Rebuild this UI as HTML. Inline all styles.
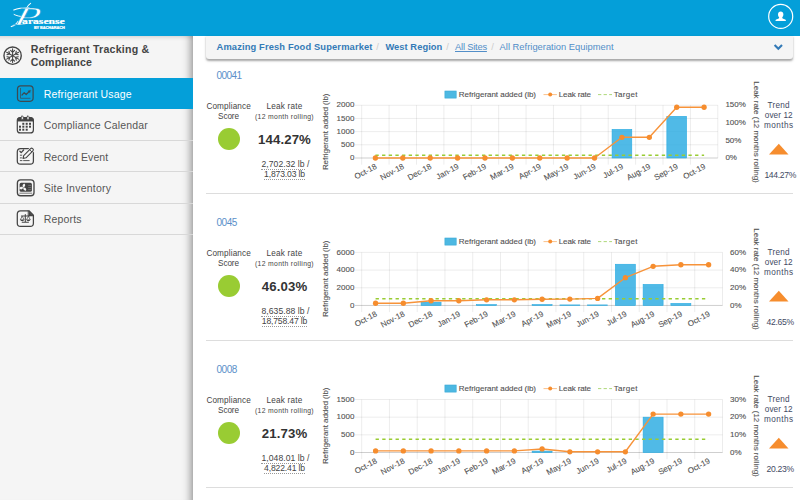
<!DOCTYPE html>
<html lang="en">
<head>
<meta charset="utf-8">
<title>Refrigerant Usage - Parasense</title>
<style>
html,body{margin:0;padding:0;}
body{width:800px;height:500px;overflow:hidden;position:relative;background:#fff;font-family:"Liberation Sans",Arial,sans-serif;color:#444;}
.t{position:absolute;white-space:nowrap;}
a{text-decoration:none;color:inherit;}
#hdr{position:absolute;left:0;top:0;width:800px;height:36.2px;background:#049fd9;}
#side{position:absolute;left:0;top:36px;width:193px;height:464px;background:#f5f5f5;box-shadow:inset -11px 0 9px -9px rgba(0,0,0,.42),inset 0 5px 4px -4px rgba(0,0,0,.16);}
#side .item{position:absolute;left:0;width:193px;height:30.25px;border-bottom:1px solid #dcdcdc;}
#side .item.sel{background:#049fd9;border-bottom:0;height:31.25px;}
#crumb{position:absolute;left:206px;top:36px;width:587.3px;height:22.5px;background:#f5f5f5;border-radius:0 0 3px 3px;box-shadow:0 1.3px 2.2px rgba(0,0,0,.35);}
.sep{position:absolute;left:206px;width:587px;height:1px;background:#ddd;}
.dot{position:absolute;width:22px;height:22px;border-radius:50%;background:#99cc33;}
svg{position:absolute;overflow:visible;}
svg text{font-family:"Liberation Sans",Arial,sans-serif;}
.ch text{fill:#505050;stroke:#505050;stroke-width:0.1px;}
.dl{position:absolute;height:0;border-top:1px dotted #999;}
</style>
</head>
<body>

<div id="hdr">
<svg id="logo" style="left:0;top:0" width="80" height="36" viewBox="0 0 80 36">
<g fill="none" stroke="#fff" stroke-linecap="round">
<path d="M13.8 10C17.5 8.4 22 7.7 29 7.7" stroke-width="1.15"/>
<path d="M14.1 14.5C16.5 15.7 19.5 16.5 24 16.8" stroke-width="0.95"/>
<path d="M18 21.5C16.4 24.3 14.3 25.9 11.3 26.5" stroke-width="1.25"/>
<path d="M26.4 8.4C27.4 6.2 28.8 4.6 30.6 3.4" stroke-width="1.05"/>
</g>
<text transform="translate(13.4 24.6) skewX(-14) scale(1.56 1)" font-style="italic" font-size="26" fill="#fff" stroke="#049fd9" stroke-width="0.45" style="font-family:'Liberation Serif',serif">P</text>
<text x="22.1" y="23.5" font-weight="bold" font-size="8.1" fill="#fff" stroke="#fff" stroke-width="0.2" textLength="42.6" lengthAdjust="spacingAndGlyphs" style="font-family:'Liberation Serif',serif">arasense</text>
<text x="33.9" y="28.9" font-weight="bold" font-size="3.2" fill="#fff" stroke="#fff" stroke-width="0.22" textLength="30.8" lengthAdjust="spacingAndGlyphs">BY BACHARACH</text>
</svg>
<svg id="user" style="left:766px;top:2px" width="30" height="30" viewBox="766 2 30 30">
<circle cx="780.7" cy="16.4" r="12" fill="none" stroke="#fff" stroke-width="1.2"/>
<path d="M780.7 11.6c1.6 0 2.7 1.2 2.7 2.9 0 1.2-.5 2.2-1.1 2.8-.2.7.1 1.1.9 1.4l2 .8c.6.3.7.8.7 1.5h-10.4c0-.7.1-1.2.7-1.5l2-.8c.8-.3 1.1-.7.9-1.4-.6-.6-1.1-1.6-1.1-2.8 0-1.7 1.1-2.9 2.7-2.9z" fill="#fff"/>
</svg>
</div>
<div id="side">
</div>
<div class="item sel" style="position:absolute;left:0;top:78px;width:193px;height:31.33px;background:#049fd9;"></div>
<a class="t" style="left:43.70px;top:88px;font-size:10.5px;line-height:13.12px;color:#fff;letter-spacing:0.170px;">Refrigerant Usage</a>
<div class="item" style="position:absolute;left:0;top:109.33px;width:193px;height:30.58px;border-bottom:0.75px solid #d8d8d8;"></div>
<a class="t" style="left:43.70px;top:119px;font-size:10.5px;line-height:13.12px;color:#555;letter-spacing:0.175px;">Compliance Calendar</a>
<div class="item" style="position:absolute;left:0;top:140.67px;width:193px;height:30.58px;border-bottom:0.75px solid #d8d8d8;"></div>
<a class="t" style="left:43.70px;top:151px;font-size:10.5px;line-height:13.12px;color:#555;letter-spacing:0.082px;">Record Event</a>
<div class="item" style="position:absolute;left:0;top:172px;width:193px;height:30.58px;border-bottom:0.75px solid #d8d8d8;"></div>
<a class="t" style="left:43.70px;top:182px;font-size:10.5px;line-height:13.12px;color:#555;letter-spacing:0.243px;">Site Inventory</a>
<div class="item" style="position:absolute;left:0;top:203.33px;width:193px;height:30.58px;border-bottom:0.75px solid #d8d8d8;"></div>
<a class="t" style="left:43.70px;top:213px;font-size:10.5px;line-height:13.12px;color:#555;letter-spacing:0.176px;">Reports</a>
<span class="t" style="left:30.75px;top:43px;font-size:10.6px;line-height:13.25px;color:#444;font-weight:bold;letter-spacing:0.230px;">Refrigerant Tracking &amp;</span>
<span class="t" style="left:30.75px;top:56px;font-size:10.6px;line-height:13.25px;color:#444;font-weight:bold;letter-spacing:0.117px;">Compliance</span>
<svg style="left:0;top:36px" width="193" height="200" viewBox="0 36 193 200" fill="none" stroke="#444" stroke-linecap="round" stroke-linejoin="round">
<!-- snowflake -->
<circle cx="12.6" cy="55.7" r="8.65" stroke-width="1.4"/>
<g stroke-width="1.05" transform="translate(12.6 55.7)">
<path d="M0 -6.9V6.9M-2 -5.4L0 -3.3L2 -5.4M-2 5.4L0 3.3L2 5.4"/>
<g transform="rotate(60)"><path d="M0 -6.9V6.9M-2 -5.4L0 -3.3L2 -5.4M-2 5.4L0 3.3L2 5.4"/></g>
<g transform="rotate(120)"><path d="M0 -6.9V6.9M-2 -5.4L0 -3.3L2 -5.4M-2 5.4L0 3.3L2 5.4"/></g>
</g>
<!-- usage -->
<rect x="17.5" y="85.9" width="15.6" height="15.4" rx="3.2" stroke="#3d4a52" stroke-width="1.25"/>
<path d="M20.5 88.4V98.3H30.1" stroke="#3d4a52" stroke-width="0.7"/>
<path d="M22 95L24.2 92.7L26.2 94.5L29.3 91.4" stroke="#3d4a52" stroke-width="1.2"/>
<path d="M30.5 90.2L27.9 90.9L29.8 92.8Z" fill="#3d4a52" stroke="#3d4a52" stroke-width="0.3"/>
<!-- calendar -->
<rect x="17.3" y="117.6" width="16.1" height="15.3" rx="3" stroke-width="1.2"/>
<path d="M17.6 120.9V119.6C17.6 118.3 18.6 117.5 19.8 117.5H30.9C32.1 117.5 33.1 118.3 33.1 119.6V120.9Z" fill="#444" stroke-width="0.6"/>
<rect x="21.3" y="116.2" width="2" height="3.3" rx=".6" fill="#f5f5f5" stroke-width="0.7"/>
<rect x="27" y="116.2" width="2" height="3.3" rx=".6" fill="#f5f5f5" stroke-width="0.7"/>
<g fill="#444" stroke="none">
<rect x="22.3" y="122.8" width="2" height="2"/><rect x="25.7" y="122.8" width="2" height="2"/><rect x="29" y="122.8" width="2" height="2"/>
<rect x="19" y="125.7" width="2" height="2"/><rect x="22.3" y="125.7" width="2" height="2"/><rect x="25.7" y="125.7" width="2" height="2"/><rect x="29" y="125.7" width="2" height="2"/>
<rect x="19" y="128.7" width="2" height="2"/><rect x="22.3" y="128.7" width="2" height="2"/><rect x="25.7" y="128.7" width="2" height="2"/>
</g>
<!-- record event -->
<rect x="17.3" y="148.5" width="16.1" height="15.6" rx="3.2" stroke-width="1.25"/>
<path d="M19.9 151.3L21.2 152.6L23.6 150" stroke-width="1.3"/>
<path d="M20.3 155.2H22M20.3 157.9H22M20.3 160.6H22M23.6 160.6H29.2" stroke-width="0.9"/>
<g transform="translate(23 158.5) rotate(-45)">
<path d="M0 0L2.6 1.6H12.4Q13.8 1.6 13.8 0.3V-0.3Q13.8 -1.6 12.4 -1.6H2.6Z" fill="#f5f5f5" stroke="#f5f5f5" stroke-width="2.6"/>
<path d="M0 0L2.6 1.6H12.4Q13.8 1.6 13.8 0.3V-0.3Q13.8 -1.6 12.4 -1.6H2.6Z" fill="#f5f5f5" stroke-width="1.1"/>
<path d="M10.9 -1.6V1.6" stroke-width="0.9"/>
</g>
<!-- site inventory -->
<rect x="17.4" y="179.8" width="16.6" height="15.9" rx="3.2" stroke-width="1.35"/>
<rect x="19.6" y="182.8" width="12.3" height="9" rx="1.6" fill="#444" stroke="none"/>
<g fill="#f5f5f5" stroke="none" transform="translate(23.3 187.6)">
<path d="M0 0C-1.6 -1 -1.5 -3.6 0.5 -4C1.9 -3 1.6 -1 0 0Z" transform="rotate(12)"/>
<path d="M0 0C-1.6 -1 -1.5 -3.6 0.5 -4C1.9 -3 1.6 -1 0 0Z" transform="rotate(132)"/>
<path d="M0 0C-1.6 -1 -1.5 -3.6 0.5 -4C1.9 -3 1.6 -1 0 0Z" transform="rotate(252)"/>
</g>
<path d="M28.6 185.4H30.8M28.6 187.5H30.8M28.6 189.6H30.8" stroke="#999" stroke-width="0.55"/>
<path d="M19.8 193.2H31.8" stroke-width="0.7"/>
<!-- reports -->
<path d="M20.5 210.8H29L33.4 215.2V223.2C33.4 225 32 226.4 30.2 226.4H20.5C18.7 226.4 17.3 225 17.3 223.2V214C17.3 212.2 18.7 210.8 20.5 210.8Z" stroke-width="1.25"/>
<path d="M28.3 210.8L33.5 216H28.3Z" fill="#444" stroke-width="0.5"/>
<path d="M25.3 214.6V222M22.2 222.3H28.4M21.4 215.9H29.2" stroke-width="1.05"/>
<path d="M20.4 219.6L22.2 216.2L24 219.6M26.6 219.6L28.4 216.2L30.2 219.6" stroke-width="0.7"/>
<path d="M20.3 219.6H24.1C24.1 220.6 23.2 221.2 22.2 221.2C21.2 221.2 20.3 220.6 20.3 219.6ZM26.5 219.6H30.3C30.3 220.6 29.4 221.2 28.4 221.2C27.4 221.2 26.5 220.6 26.5 219.6Z" fill="#444" stroke="none"/>
</svg>
<div id="crumb"></div>
<a class="t" style="left:216.50px;top:42px;font-size:9.33px;line-height:11.66px;color:#337ab7;font-weight:bold;letter-spacing:0.140px;">Amazing Fresh Food Supermarket</a>
<span class="t" style="left:376.30px;top:42px;font-size:9.33px;line-height:11.66px;color:#ccc;">/</span>
<a class="t" style="left:385.40px;top:42px;font-size:9.33px;line-height:11.66px;color:#337ab7;font-weight:bold;letter-spacing:0.052px;">West Region</a>
<span class="t" style="left:446.20px;top:42px;font-size:9.33px;line-height:11.66px;color:#ccc;">/</span>
<a class="t" style="left:455.00px;top:42px;font-size:9.33px;line-height:11.66px;color:#528ec8;letter-spacing:-0.200px;text-decoration:underline;">All Sites</a>
<span class="t" style="left:491.20px;top:42px;font-size:9.33px;line-height:11.66px;color:#ccc;">/</span>
<a class="t" style="left:499.60px;top:42px;font-size:9.33px;line-height:11.66px;color:#528ec8;letter-spacing:0.016px;">All Refrigeration Equipment</a>
<svg style="left:770px;top:40px" width="16" height="14" viewBox="770 40 16 14"><path d="M774.6 44.9L778.3 48.7L782 44.9" fill="none" stroke="#337ab7" stroke-width="2.1" stroke-linecap="butt"/></svg>
<!-- card 00041 -->
<a class="t" style="left:216.40px;top:70px;font-size:10px;line-height:12.5px;color:#5b8fc9;letter-spacing:-0.542px;">00041</a>
<span class="t" style="left:206.40px;top:102px;font-size:8.2px;line-height:10.25px;color:#444;letter-spacing:0.130px;">Compliance</span>
<span class="t" style="left:218.00px;top:112px;font-size:8.2px;line-height:10.25px;color:#444;letter-spacing:-0.084px;">Score</span>
<div class="dot" style="left:218px;top:128px"></div>
<span class="t" style="left:266.50px;top:102px;font-size:8.2px;line-height:10.25px;color:#444;letter-spacing:0.201px;">Leak rate</span>
<span class="t" style="left:255.00px;top:113px;font-size:6.8px;line-height:8.5px;color:#444;letter-spacing:0.338px;">(12 month rolling)</span>
<span class="t" style="left:258.00px;top:132px;font-size:13.2px;line-height:16.5px;color:#333;font-weight:bold;letter-spacing:0.127px;">144.27%</span>
<span class="t" style="left:261.40px;top:159px;font-size:8.6px;line-height:10.75px;color:#444;letter-spacing:0.067px;">2,702.32 lb</span>
<i class="dl" style="left:261.4px;top:168.7px;width:43.3px"></i>
<span class="t" style="left:307.00px;top:159px;font-size:8.6px;line-height:10.75px;color:#444;">/</span>
<span class="t" style="left:264.00px;top:169px;font-size:8.6px;line-height:10.75px;color:#444;letter-spacing:-0.142px;">1,873.03 lb</span>
<i class="dl" style="left:264.0px;top:179.0px;width:41.0px"></i>
<span class="t" style="left:767.50px;top:101px;font-size:8.2px;line-height:10.25px;color:#3f4a63;letter-spacing:0.256px;">Trend</span>
<span class="t" style="left:764.80px;top:111px;font-size:8.2px;line-height:10.25px;color:#3f4a63;letter-spacing:0.078px;">over 12</span>
<span class="t" style="left:764.10px;top:121px;font-size:8.2px;line-height:10.25px;color:#3f4a63;letter-spacing:0.418px;">months</span>
<span class="t" style="left:764.40px;top:170px;font-size:8.6px;line-height:10.75px;color:#3f4a63;letter-spacing:-0.336px;">144.27%</span>
<div class="sep" style="top:193px"></div>
<svg class="ch" style="left:320px;top:80px" width="445" height="105" viewBox="320 80 445 105">
<rect x="444.9" y="91.00" width="11.3" height="7.1" fill="#4db8e2" stroke="#3aa9d6" stroke-width="0.6"/>
<text x="458.8" y="96.80" font-size="8" textLength="77.2" lengthAdjust="spacing">Refrigerant added (lb)</text>
<path d="M543.5 94.60H556.9" stroke="#f9b06a" stroke-width="0.8"/><circle cx="550.2" cy="94.60" r="2" fill="#f68d2e"/>
<text x="558.8" y="96.80" font-size="8" textLength="32.2" lengthAdjust="spacing">Leak rate</text>
<path d="M598 94.60H612" stroke="#a5d46a" stroke-width="0.9" stroke-dasharray="3.3 2.3"/>
<text x="613.8" y="96.80" font-size="8" textLength="23.7" lengthAdjust="spacing">Target</text>
<text transform="translate(328.3 131.80) rotate(-90)" text-anchor="middle" font-size="8" textLength="76.6" lengthAdjust="spacing">Refrigerant added (lb)</text>
<text transform="translate(753.6 132.00) rotate(90)" text-anchor="middle" font-size="8" textLength="101.5" lengthAdjust="spacing">Leak rate (12 months rolling)</text>
<path d="M355.03 158.00H717.80" stroke="rgba(0,0,0,0.25)" stroke-width="0.75"/>
<text x="354.4" y="160.15" text-anchor="end" font-size="8">0</text>
<path d="M355.03 144.81H717.80" stroke="rgba(0,0,0,0.1)" stroke-width="0.75"/>
<text x="354.4" y="146.96" text-anchor="end" font-size="8">500</text>
<path d="M355.03 131.62H717.80" stroke="rgba(0,0,0,0.1)" stroke-width="0.75"/>
<text x="354.4" y="133.78" text-anchor="end" font-size="8">1000</text>
<path d="M355.03 118.44H717.80" stroke="rgba(0,0,0,0.1)" stroke-width="0.75"/>
<text x="354.4" y="120.59" text-anchor="end" font-size="8">1500</text>
<path d="M355.03 105.25H717.80" stroke="rgba(0,0,0,0.1)" stroke-width="0.75"/>
<text x="354.4" y="107.40" text-anchor="end" font-size="8">2000</text>
<path d="M361.70 105.25V164.67" stroke="rgba(0,0,0,0.1)" stroke-width="0.75"/>
<path d="M389.09 105.25V164.67" stroke="rgba(0,0,0,0.1)" stroke-width="0.75"/>
<path d="M416.48 105.25V164.67" stroke="rgba(0,0,0,0.1)" stroke-width="0.75"/>
<path d="M443.88 105.25V164.67" stroke="rgba(0,0,0,0.1)" stroke-width="0.75"/>
<path d="M471.27 105.25V164.67" stroke="rgba(0,0,0,0.1)" stroke-width="0.75"/>
<path d="M498.66 105.25V164.67" stroke="rgba(0,0,0,0.1)" stroke-width="0.75"/>
<path d="M526.05 105.25V164.67" stroke="rgba(0,0,0,0.1)" stroke-width="0.75"/>
<path d="M553.45 105.25V164.67" stroke="rgba(0,0,0,0.1)" stroke-width="0.75"/>
<path d="M580.84 105.25V164.67" stroke="rgba(0,0,0,0.1)" stroke-width="0.75"/>
<path d="M608.23 105.25V164.67" stroke="rgba(0,0,0,0.1)" stroke-width="0.75"/>
<path d="M635.62 105.25V164.67" stroke="rgba(0,0,0,0.1)" stroke-width="0.75"/>
<path d="M663.02 105.25V164.67" stroke="rgba(0,0,0,0.1)" stroke-width="0.75"/>
<path d="M690.41 105.25V164.67" stroke="rgba(0,0,0,0.1)" stroke-width="0.75"/>
<path d="M717.80 105.25V158.00" stroke="rgba(0,0,0,0.1)" stroke-width="0.75"/>
<text x="725.40" y="160.15" font-size="8">0%</text>
<text x="725.40" y="142.57" font-size="8">50%</text>
<text x="725.40" y="124.98" font-size="8">100%</text>
<text x="725.40" y="107.40" font-size="8">150%</text>
<rect x="612.07" y="129.38" width="19.72" height="28.62" fill="rgba(41,171,226,0.82)" stroke="#29abe2" stroke-width="0.6"/>
<rect x="666.85" y="116.33" width="19.72" height="41.67" fill="rgba(41,171,226,0.82)" stroke="#29abe2" stroke-width="0.6"/>
<path d="M375.40 155.36H704.10" stroke="#99cc33" stroke-width="1.5" stroke-dasharray="3.33 3.33" fill="none"/>
<path d="M375.40 158.00 L402.79 158.00 L430.18 158.00 L457.57 158.00 L484.97 158.00 L512.36 158.00 L539.75 158.00 L567.14 158.00 L594.53 158.00 L621.93 137.30 L649.32 137.30 L676.71 107.27 L704.10 107.27" stroke="#f7933a" stroke-width="1.4" fill="none" stroke-linejoin="round"/>
<circle cx="375.40" cy="158.00" r="2.65" fill="#f68d2e"/>
<circle cx="402.79" cy="158.00" r="2.65" fill="#f68d2e"/>
<circle cx="430.18" cy="158.00" r="2.65" fill="#f68d2e"/>
<circle cx="457.57" cy="158.00" r="2.65" fill="#f68d2e"/>
<circle cx="484.97" cy="158.00" r="2.65" fill="#f68d2e"/>
<circle cx="512.36" cy="158.00" r="2.65" fill="#f68d2e"/>
<circle cx="539.75" cy="158.00" r="2.65" fill="#f68d2e"/>
<circle cx="567.14" cy="158.00" r="2.65" fill="#f68d2e"/>
<circle cx="594.53" cy="158.00" r="2.65" fill="#f68d2e"/>
<circle cx="621.93" cy="137.30" r="2.65" fill="#f68d2e"/>
<circle cx="649.32" cy="137.30" r="2.65" fill="#f68d2e"/>
<circle cx="676.71" cy="107.27" r="2.65" fill="#f68d2e"/>
<circle cx="704.10" cy="107.27" r="2.65" fill="#f68d2e"/>
<text transform="translate(376.00 165.60) rotate(-28.5)" text-anchor="end" font-size="8" dy="2.85">Oct-18</text>
<text transform="translate(403.39 165.60) rotate(-28.5)" text-anchor="end" font-size="8" dy="2.85">Nov-18</text>
<text transform="translate(430.78 165.60) rotate(-28.5)" text-anchor="end" font-size="8" dy="2.85">Dec-18</text>
<text transform="translate(458.17 165.60) rotate(-28.5)" text-anchor="end" font-size="8" dy="2.85">Jan-19</text>
<text transform="translate(485.57 165.60) rotate(-28.5)" text-anchor="end" font-size="8" dy="2.85">Feb-19</text>
<text transform="translate(512.96 165.60) rotate(-28.5)" text-anchor="end" font-size="8" dy="2.85">Mar-19</text>
<text transform="translate(540.35 165.60) rotate(-28.5)" text-anchor="end" font-size="8" dy="2.85">Apr-19</text>
<text transform="translate(567.74 165.60) rotate(-28.5)" text-anchor="end" font-size="8" dy="2.85">May-19</text>
<text transform="translate(595.13 165.60) rotate(-28.5)" text-anchor="end" font-size="8" dy="2.85">Jun-19</text>
<text transform="translate(622.53 165.60) rotate(-28.5)" text-anchor="end" font-size="8" dy="2.85">Jul-19</text>
<text transform="translate(649.92 165.60) rotate(-28.5)" text-anchor="end" font-size="8" dy="2.85">Aug-19</text>
<text transform="translate(677.31 165.60) rotate(-28.5)" text-anchor="end" font-size="8" dy="2.85">Sep-19</text>
<text transform="translate(704.70 165.60) rotate(-28.5)" text-anchor="end" font-size="8" dy="2.85">Oct-19</text>
</svg>
<svg style="left:765px;top:140px" width="28" height="18" viewBox="765 140 28 18"><path d="M778.8 143.7L788.5 154.4H769Z" fill="#f68d2e"/></svg>
<!-- card 0045 -->
<a class="t" style="left:216.40px;top:217px;font-size:10px;line-height:12.5px;color:#5b8fc9;letter-spacing:-0.412px;">0045</a>
<span class="t" style="left:206.40px;top:249px;font-size:8.2px;line-height:10.25px;color:#444;letter-spacing:0.130px;">Compliance</span>
<span class="t" style="left:218.00px;top:259px;font-size:8.2px;line-height:10.25px;color:#444;letter-spacing:-0.084px;">Score</span>
<div class="dot" style="left:218px;top:275px"></div>
<span class="t" style="left:266.50px;top:249px;font-size:8.2px;line-height:10.25px;color:#444;letter-spacing:0.201px;">Leak rate</span>
<span class="t" style="left:255.00px;top:260px;font-size:6.8px;line-height:8.5px;color:#444;letter-spacing:0.338px;">(12 month rolling)</span>
<span class="t" style="left:261.70px;top:279px;font-size:13.2px;line-height:16.5px;color:#333;font-weight:bold;letter-spacing:0.138px;">46.03%</span>
<span class="t" style="left:261.40px;top:306px;font-size:8.6px;line-height:10.75px;color:#444;letter-spacing:0.067px;">8,635.88 lb</span>
<i class="dl" style="left:261.4px;top:315.7px;width:43.3px"></i>
<span class="t" style="left:307.00px;top:306px;font-size:8.6px;line-height:10.75px;color:#444;">/</span>
<span class="t" style="left:261.80px;top:316px;font-size:8.6px;line-height:10.75px;color:#444;letter-spacing:-0.162px;">18,758.47 lb</span>
<i class="dl" style="left:261.8px;top:326.0px;width:45.4px"></i>
<span class="t" style="left:767.50px;top:248px;font-size:8.2px;line-height:10.25px;color:#3f4a63;letter-spacing:0.256px;">Trend</span>
<span class="t" style="left:764.80px;top:258px;font-size:8.2px;line-height:10.25px;color:#3f4a63;letter-spacing:0.078px;">over 12</span>
<span class="t" style="left:764.10px;top:268px;font-size:8.2px;line-height:10.25px;color:#3f4a63;letter-spacing:0.418px;">months</span>
<span class="t" style="left:766.50px;top:317px;font-size:8.6px;line-height:10.75px;color:#3f4a63;letter-spacing:-0.295px;">42.65%</span>
<div class="sep" style="top:340px"></div>
<svg class="ch" style="left:320px;top:227px" width="445" height="105" viewBox="320 227 445 105">
<rect x="444.9" y="238.00" width="11.3" height="7.1" fill="#4db8e2" stroke="#3aa9d6" stroke-width="0.6"/>
<text x="458.8" y="243.80" font-size="8" textLength="77.2" lengthAdjust="spacing">Refrigerant added (lb)</text>
<path d="M543.5 241.60H556.9" stroke="#f9b06a" stroke-width="0.8"/><circle cx="550.2" cy="241.60" r="2" fill="#f68d2e"/>
<text x="558.8" y="243.80" font-size="8" textLength="32.2" lengthAdjust="spacing">Leak rate</text>
<path d="M598 241.60H612" stroke="#a5d46a" stroke-width="0.9" stroke-dasharray="3.3 2.3"/>
<text x="613.8" y="243.80" font-size="8" textLength="23.7" lengthAdjust="spacing">Target</text>
<text transform="translate(328.3 278.80) rotate(-90)" text-anchor="middle" font-size="8" textLength="76.6" lengthAdjust="spacing">Refrigerant added (lb)</text>
<text transform="translate(753.6 279.00) rotate(90)" text-anchor="middle" font-size="8" textLength="101.5" lengthAdjust="spacing">Leak rate (12 months rolling)</text>
<path d="M355.03 305.45H722.50" stroke="rgba(0,0,0,0.25)" stroke-width="0.75"/>
<text x="354.4" y="307.60" text-anchor="end" font-size="8">0</text>
<path d="M355.03 287.77H722.50" stroke="rgba(0,0,0,0.1)" stroke-width="0.75"/>
<text x="354.4" y="289.92" text-anchor="end" font-size="8">2000</text>
<path d="M355.03 270.08H722.50" stroke="rgba(0,0,0,0.1)" stroke-width="0.75"/>
<text x="354.4" y="272.23" text-anchor="end" font-size="8">4000</text>
<path d="M355.03 252.40H722.50" stroke="rgba(0,0,0,0.1)" stroke-width="0.75"/>
<text x="354.4" y="254.55" text-anchor="end" font-size="8">6000</text>
<path d="M361.70 252.40V312.12" stroke="rgba(0,0,0,0.1)" stroke-width="0.75"/>
<path d="M389.45 252.40V312.12" stroke="rgba(0,0,0,0.1)" stroke-width="0.75"/>
<path d="M417.21 252.40V312.12" stroke="rgba(0,0,0,0.1)" stroke-width="0.75"/>
<path d="M444.96 252.40V312.12" stroke="rgba(0,0,0,0.1)" stroke-width="0.75"/>
<path d="M472.72 252.40V312.12" stroke="rgba(0,0,0,0.1)" stroke-width="0.75"/>
<path d="M500.47 252.40V312.12" stroke="rgba(0,0,0,0.1)" stroke-width="0.75"/>
<path d="M528.22 252.40V312.12" stroke="rgba(0,0,0,0.1)" stroke-width="0.75"/>
<path d="M555.98 252.40V312.12" stroke="rgba(0,0,0,0.1)" stroke-width="0.75"/>
<path d="M583.73 252.40V312.12" stroke="rgba(0,0,0,0.1)" stroke-width="0.75"/>
<path d="M611.48 252.40V312.12" stroke="rgba(0,0,0,0.1)" stroke-width="0.75"/>
<path d="M639.24 252.40V312.12" stroke="rgba(0,0,0,0.1)" stroke-width="0.75"/>
<path d="M666.99 252.40V312.12" stroke="rgba(0,0,0,0.1)" stroke-width="0.75"/>
<path d="M694.75 252.40V312.12" stroke="rgba(0,0,0,0.1)" stroke-width="0.75"/>
<path d="M722.50 252.40V305.45" stroke="rgba(0,0,0,0.1)" stroke-width="0.75"/>
<text x="730.10" y="307.60" font-size="8">0%</text>
<text x="730.10" y="289.92" font-size="8">20%</text>
<text x="730.10" y="272.23" font-size="8">40%</text>
<text x="730.10" y="254.55" font-size="8">60%</text>
<rect x="421.09" y="302.18" width="19.98" height="3.27" fill="rgba(41,171,226,0.82)" stroke="#29abe2" stroke-width="0.6"/>
<rect x="476.60" y="304.57" width="19.98" height="0.88" fill="rgba(41,171,226,0.82)" stroke="#29abe2" stroke-width="0.6"/>
<rect x="532.11" y="304.57" width="19.98" height="0.88" fill="rgba(41,171,226,0.82)" stroke="#29abe2" stroke-width="0.6"/>
<rect x="559.86" y="304.92" width="19.98" height="0.53" fill="rgba(41,171,226,0.82)" stroke="#29abe2" stroke-width="0.6"/>
<rect x="587.62" y="304.92" width="19.98" height="0.53" fill="rgba(41,171,226,0.82)" stroke="#29abe2" stroke-width="0.6"/>
<rect x="615.37" y="264.25" width="19.98" height="41.20" fill="rgba(41,171,226,0.82)" stroke="#29abe2" stroke-width="0.6"/>
<rect x="643.12" y="284.41" width="19.98" height="21.04" fill="rgba(41,171,226,0.82)" stroke="#29abe2" stroke-width="0.6"/>
<rect x="670.88" y="303.42" width="19.98" height="2.03" fill="rgba(41,171,226,0.82)" stroke="#29abe2" stroke-width="0.6"/>
<path d="M375.58 298.82H708.62" stroke="#99cc33" stroke-width="1.5" stroke-dasharray="3.33 3.33" fill="none"/>
<path d="M375.58 303.24 L403.33 303.24 L431.08 300.76 L458.84 300.76 L486.59 299.79 L514.35 299.79 L542.10 299.26 L569.85 299.08 L597.61 298.38 L625.36 277.69 L653.12 266.28 L680.87 264.75 L708.62 264.75" stroke="#f7933a" stroke-width="1.4" fill="none" stroke-linejoin="round"/>
<circle cx="375.58" cy="303.24" r="2.65" fill="#f68d2e"/>
<circle cx="403.33" cy="303.24" r="2.65" fill="#f68d2e"/>
<circle cx="431.08" cy="300.76" r="2.65" fill="#f68d2e"/>
<circle cx="458.84" cy="300.76" r="2.65" fill="#f68d2e"/>
<circle cx="486.59" cy="299.79" r="2.65" fill="#f68d2e"/>
<circle cx="514.35" cy="299.79" r="2.65" fill="#f68d2e"/>
<circle cx="542.10" cy="299.26" r="2.65" fill="#f68d2e"/>
<circle cx="569.85" cy="299.08" r="2.65" fill="#f68d2e"/>
<circle cx="597.61" cy="298.38" r="2.65" fill="#f68d2e"/>
<circle cx="625.36" cy="277.69" r="2.65" fill="#f68d2e"/>
<circle cx="653.12" cy="266.28" r="2.65" fill="#f68d2e"/>
<circle cx="680.87" cy="264.75" r="2.65" fill="#f68d2e"/>
<circle cx="708.62" cy="264.75" r="2.65" fill="#f68d2e"/>
<text transform="translate(376.18 313.05) rotate(-28.5)" text-anchor="end" font-size="8" dy="2.85">Oct-18</text>
<text transform="translate(403.93 313.05) rotate(-28.5)" text-anchor="end" font-size="8" dy="2.85">Nov-18</text>
<text transform="translate(431.68 313.05) rotate(-28.5)" text-anchor="end" font-size="8" dy="2.85">Dec-18</text>
<text transform="translate(459.44 313.05) rotate(-28.5)" text-anchor="end" font-size="8" dy="2.85">Jan-19</text>
<text transform="translate(487.19 313.05) rotate(-28.5)" text-anchor="end" font-size="8" dy="2.85">Feb-19</text>
<text transform="translate(514.95 313.05) rotate(-28.5)" text-anchor="end" font-size="8" dy="2.85">Mar-19</text>
<text transform="translate(542.70 313.05) rotate(-28.5)" text-anchor="end" font-size="8" dy="2.85">Apr-19</text>
<text transform="translate(570.45 313.05) rotate(-28.5)" text-anchor="end" font-size="8" dy="2.85">May-19</text>
<text transform="translate(598.21 313.05) rotate(-28.5)" text-anchor="end" font-size="8" dy="2.85">Jun-19</text>
<text transform="translate(625.96 313.05) rotate(-28.5)" text-anchor="end" font-size="8" dy="2.85">Jul-19</text>
<text transform="translate(653.72 313.05) rotate(-28.5)" text-anchor="end" font-size="8" dy="2.85">Aug-19</text>
<text transform="translate(681.47 313.05) rotate(-28.5)" text-anchor="end" font-size="8" dy="2.85">Sep-19</text>
<text transform="translate(709.22 313.05) rotate(-28.5)" text-anchor="end" font-size="8" dy="2.85">Oct-19</text>
</svg>
<svg style="left:765px;top:287px" width="28" height="18" viewBox="765 287 28 18"><path d="M778.8 290.7L788.5 301.4H769Z" fill="#f68d2e"/></svg>
<!-- card 0008 -->
<a class="t" style="left:216.40px;top:364px;font-size:10px;line-height:12.5px;color:#5b8fc9;letter-spacing:-0.412px;">0008</a>
<span class="t" style="left:206.40px;top:396px;font-size:8.2px;line-height:10.25px;color:#444;letter-spacing:0.130px;">Compliance</span>
<span class="t" style="left:218.00px;top:406px;font-size:8.2px;line-height:10.25px;color:#444;letter-spacing:-0.084px;">Score</span>
<div class="dot" style="left:218px;top:422px"></div>
<span class="t" style="left:266.50px;top:396px;font-size:8.2px;line-height:10.25px;color:#444;letter-spacing:0.201px;">Leak rate</span>
<span class="t" style="left:255.00px;top:407px;font-size:6.8px;line-height:8.5px;color:#444;letter-spacing:0.338px;">(12 month rolling)</span>
<span class="t" style="left:261.70px;top:426px;font-size:13.2px;line-height:16.5px;color:#333;font-weight:bold;letter-spacing:0.138px;">21.73%</span>
<span class="t" style="left:261.40px;top:453px;font-size:8.6px;line-height:10.75px;color:#444;letter-spacing:0.067px;">1,048.01 lb</span>
<i class="dl" style="left:261.4px;top:462.7px;width:43.3px"></i>
<span class="t" style="left:307.00px;top:453px;font-size:8.6px;line-height:10.75px;color:#444;">/</span>
<span class="t" style="left:264.00px;top:463px;font-size:8.6px;line-height:10.75px;color:#444;letter-spacing:-0.142px;">4,822.41 lb</span>
<i class="dl" style="left:264.0px;top:473.0px;width:41.0px"></i>
<span class="t" style="left:767.50px;top:395px;font-size:8.2px;line-height:10.25px;color:#3f4a63;letter-spacing:0.256px;">Trend</span>
<span class="t" style="left:764.80px;top:405px;font-size:8.2px;line-height:10.25px;color:#3f4a63;letter-spacing:0.078px;">over 12</span>
<span class="t" style="left:764.10px;top:415px;font-size:8.2px;line-height:10.25px;color:#3f4a63;letter-spacing:0.418px;">months</span>
<span class="t" style="left:766.50px;top:464px;font-size:8.6px;line-height:10.75px;color:#3f4a63;letter-spacing:-0.295px;">20.23%</span>
<div class="sep" style="top:487px"></div>
<svg class="ch" style="left:320px;top:374px" width="445" height="105" viewBox="320 374 445 105">
<rect x="444.9" y="385.00" width="11.3" height="7.1" fill="#4db8e2" stroke="#3aa9d6" stroke-width="0.6"/>
<text x="458.8" y="390.80" font-size="8" textLength="77.2" lengthAdjust="spacing">Refrigerant added (lb)</text>
<path d="M543.5 388.60H556.9" stroke="#f9b06a" stroke-width="0.8"/><circle cx="550.2" cy="388.60" r="2" fill="#f68d2e"/>
<text x="558.8" y="390.80" font-size="8" textLength="32.2" lengthAdjust="spacing">Leak rate</text>
<path d="M598 388.60H612" stroke="#a5d46a" stroke-width="0.9" stroke-dasharray="3.3 2.3"/>
<text x="613.8" y="390.80" font-size="8" textLength="23.7" lengthAdjust="spacing">Target</text>
<text transform="translate(328.3 425.80) rotate(-90)" text-anchor="middle" font-size="8" textLength="76.6" lengthAdjust="spacing">Refrigerant added (lb)</text>
<text transform="translate(753.6 426.00) rotate(90)" text-anchor="middle" font-size="8" textLength="101.5" lengthAdjust="spacing">Leak rate (12 months rolling)</text>
<path d="M355.03 452.50H722.50" stroke="rgba(0,0,0,0.25)" stroke-width="0.75"/>
<text x="354.4" y="454.65" text-anchor="end" font-size="8">0</text>
<path d="M355.03 434.83H722.50" stroke="rgba(0,0,0,0.1)" stroke-width="0.75"/>
<text x="354.4" y="436.98" text-anchor="end" font-size="8">500</text>
<path d="M355.03 417.17H722.50" stroke="rgba(0,0,0,0.1)" stroke-width="0.75"/>
<text x="354.4" y="419.32" text-anchor="end" font-size="8">1000</text>
<path d="M355.03 399.50H722.50" stroke="rgba(0,0,0,0.1)" stroke-width="0.75"/>
<text x="354.4" y="401.65" text-anchor="end" font-size="8">1500</text>
<path d="M361.70 399.50V459.17" stroke="rgba(0,0,0,0.1)" stroke-width="0.75"/>
<path d="M389.45 399.50V459.17" stroke="rgba(0,0,0,0.1)" stroke-width="0.75"/>
<path d="M417.21 399.50V459.17" stroke="rgba(0,0,0,0.1)" stroke-width="0.75"/>
<path d="M444.96 399.50V459.17" stroke="rgba(0,0,0,0.1)" stroke-width="0.75"/>
<path d="M472.72 399.50V459.17" stroke="rgba(0,0,0,0.1)" stroke-width="0.75"/>
<path d="M500.47 399.50V459.17" stroke="rgba(0,0,0,0.1)" stroke-width="0.75"/>
<path d="M528.22 399.50V459.17" stroke="rgba(0,0,0,0.1)" stroke-width="0.75"/>
<path d="M555.98 399.50V459.17" stroke="rgba(0,0,0,0.1)" stroke-width="0.75"/>
<path d="M583.73 399.50V459.17" stroke="rgba(0,0,0,0.1)" stroke-width="0.75"/>
<path d="M611.48 399.50V459.17" stroke="rgba(0,0,0,0.1)" stroke-width="0.75"/>
<path d="M639.24 399.50V459.17" stroke="rgba(0,0,0,0.1)" stroke-width="0.75"/>
<path d="M666.99 399.50V459.17" stroke="rgba(0,0,0,0.1)" stroke-width="0.75"/>
<path d="M694.75 399.50V459.17" stroke="rgba(0,0,0,0.1)" stroke-width="0.75"/>
<path d="M722.50 399.50V452.50" stroke="rgba(0,0,0,0.1)" stroke-width="0.75"/>
<text x="730.10" y="454.65" font-size="8">0%</text>
<text x="730.10" y="436.98" font-size="8">10%</text>
<text x="730.10" y="419.32" font-size="8">20%</text>
<text x="730.10" y="401.65" font-size="8">30%</text>
<rect x="532.11" y="451.09" width="19.98" height="1.41" fill="rgba(41,171,226,0.82)" stroke="#29abe2" stroke-width="0.6"/>
<rect x="643.12" y="417.17" width="19.98" height="35.33" fill="rgba(41,171,226,0.82)" stroke="#29abe2" stroke-width="0.6"/>
<path d="M375.58 439.25H708.62" stroke="#99cc33" stroke-width="1.5" stroke-dasharray="3.33 3.33" fill="none"/>
<path d="M375.58 450.91 L403.33 450.91 L431.08 450.91 L458.84 450.91 L486.59 450.91 L514.35 450.91 L542.10 448.97 L569.85 451.79 L597.61 451.79 L625.36 451.79 L653.12 414.11 L680.87 414.11 L708.62 414.11" stroke="#f7933a" stroke-width="1.4" fill="none" stroke-linejoin="round"/>
<circle cx="375.58" cy="450.91" r="2.65" fill="#f68d2e"/>
<circle cx="403.33" cy="450.91" r="2.65" fill="#f68d2e"/>
<circle cx="431.08" cy="450.91" r="2.65" fill="#f68d2e"/>
<circle cx="458.84" cy="450.91" r="2.65" fill="#f68d2e"/>
<circle cx="486.59" cy="450.91" r="2.65" fill="#f68d2e"/>
<circle cx="514.35" cy="450.91" r="2.65" fill="#f68d2e"/>
<circle cx="542.10" cy="448.97" r="2.65" fill="#f68d2e"/>
<circle cx="569.85" cy="451.79" r="2.65" fill="#f68d2e"/>
<circle cx="597.61" cy="451.79" r="2.65" fill="#f68d2e"/>
<circle cx="625.36" cy="451.79" r="2.65" fill="#f68d2e"/>
<circle cx="653.12" cy="414.11" r="2.65" fill="#f68d2e"/>
<circle cx="680.87" cy="414.11" r="2.65" fill="#f68d2e"/>
<circle cx="708.62" cy="414.11" r="2.65" fill="#f68d2e"/>
<text transform="translate(376.18 460.10) rotate(-28.5)" text-anchor="end" font-size="8" dy="2.85">Oct-18</text>
<text transform="translate(403.93 460.10) rotate(-28.5)" text-anchor="end" font-size="8" dy="2.85">Nov-18</text>
<text transform="translate(431.68 460.10) rotate(-28.5)" text-anchor="end" font-size="8" dy="2.85">Dec-18</text>
<text transform="translate(459.44 460.10) rotate(-28.5)" text-anchor="end" font-size="8" dy="2.85">Jan-19</text>
<text transform="translate(487.19 460.10) rotate(-28.5)" text-anchor="end" font-size="8" dy="2.85">Feb-19</text>
<text transform="translate(514.95 460.10) rotate(-28.5)" text-anchor="end" font-size="8" dy="2.85">Mar-19</text>
<text transform="translate(542.70 460.10) rotate(-28.5)" text-anchor="end" font-size="8" dy="2.85">Apr-19</text>
<text transform="translate(570.45 460.10) rotate(-28.5)" text-anchor="end" font-size="8" dy="2.85">May-19</text>
<text transform="translate(598.21 460.10) rotate(-28.5)" text-anchor="end" font-size="8" dy="2.85">Jun-19</text>
<text transform="translate(625.96 460.10) rotate(-28.5)" text-anchor="end" font-size="8" dy="2.85">Jul-19</text>
<text transform="translate(653.72 460.10) rotate(-28.5)" text-anchor="end" font-size="8" dy="2.85">Aug-19</text>
<text transform="translate(681.47 460.10) rotate(-28.5)" text-anchor="end" font-size="8" dy="2.85">Sep-19</text>
<text transform="translate(709.22 460.10) rotate(-28.5)" text-anchor="end" font-size="8" dy="2.85">Oct-19</text>
</svg>
<svg style="left:765px;top:434px" width="28" height="18" viewBox="765 434 28 18"><path d="M778.8 437.7L788.5 448.4H769Z" fill="#f68d2e"/></svg>
</body>
</html>
